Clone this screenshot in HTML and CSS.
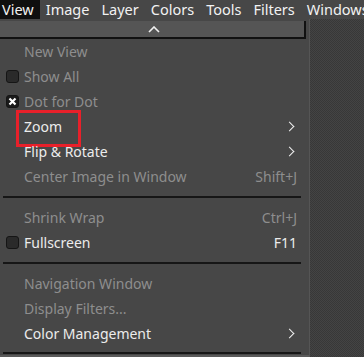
FILE: index.html
```html
<!DOCTYPE html>
<html lang="en">
<head>
  <meta charset="UTF-8" />
  <title>View menu</title>
  <link rel="stylesheet" href="styles.css">
</head>
<body>
  <nav class="menubar">
    <span class="menubar-item active">View</span>
    <span class="menubar-item">Image</span>
    <span class="menubar-item">Layer</span>
    <span class="menubar-item">Colors</span>
    <span class="menubar-item">Tools</span>
    <span class="menubar-item">Filters</span>
    <span class="menubar-item">Windows</span>
  </nav>

  <div class="workspace">
    <div class="menu">
      <div class="scroll-up">
        <svg width="12" height="7" viewBox="0 0 12 7"><path d="M1 6 L6 1 L11 6" fill="none" stroke="#f0f0f0" stroke-width="1.6"/></svg>
      </div>

      <div class="item disabled"><span class="label">New View</span></div>
      <div class="item disabled"><span class="check"></span><span class="label">Show All</span></div>
      <div class="item disabled">
        <span class="check checked">
          <svg width="11" height="11" viewBox="0 0 11 11"><path d="M2.5 2.5 L8.5 8.5 M8.5 2.5 L2.5 8.5" stroke="#fff" stroke-width="2.2"/></svg>
        </span>
        <span class="label">Dot for Dot</span>
      </div>
      <div class="item highlight"><span class="label">Zoom</span><span class="arrow"></span></div>
      <div class="item"><span class="label">Flip &amp; Rotate</span><span class="arrow"></span></div>
      <div class="item disabled"><span class="label">Center Image in Window</span><span class="accel">Shift+J</span></div>
      <div class="separator"></div>
      <div class="item disabled"><span class="label">Shrink Wrap</span><span class="accel">Ctrl+J</span></div>
      <div class="item"><span class="check"></span><span class="label">Fullscreen</span><span class="accel">F11</span></div>
      <div class="separator"></div>
      <div class="item disabled"><span class="label">Navigation Window</span></div>
      <div class="item disabled"><span class="label">Display Filters...</span></div>
      <div class="item"><span class="label">Color Management</span><span class="arrow"></span></div>
      <div class="separator last"></div>
    </div>
    <div class="canvas"></div>
  </div>
</body>
</html>
```

FILE: styles.css
```css
* {
  margin: 0;
  padding: 0;
  box-sizing: border-box;
}

body {
  width: 364px;
  height: 357px;
  overflow: hidden;
  background-color: #3c3c3c;
  color: #ececec;
  font-family: 'Noto Sans', 'Open Sans', sans-serif;
  font-size: 14px;
}

.menubar {
  display: flex;
  height: 19px;
  background-color: #474747;
  white-space: nowrap;
}

.menubar-item {
  padding: 0 6px;
  line-height: 18px;
  font-size: 14.5px;
  color: #f2f2f2;
}

.menubar-item.active {
  background-color: #0f0f0f;
  padding: 0 6px 0 2px;
}

.workspace {
  display: flex;
  height: 338px;
}

.menu {
  width: 310px;
  background-color: #474747;
  border-right: 1px solid #555;
  border-bottom: 2px solid #5a5a5a;
  padding-top: 2px;
}

.scroll-up {
  height: 18px;
  margin-right: 3px;
  background-color: #555;
  border-bottom: 2px solid #111;
  border-right: 2px solid #111;
  display: flex;
  justify-content: center;
  align-items: center;
}

.scroll-up svg {
  margin-left: 3px;
}

.item {
  position: relative;
  display: flex;
  align-items: center;
  height: 25px;
  padding: 0 12px 0 24px;
}

.item .label {
  flex: 1;
}

.item.disabled {
  color: #8e8e8e;
}

.check {
  position: absolute;
  left: 6px;
  top: 6px;
  width: 13px;
  height: 13px;
  border: 1px solid #151515;
  border-radius: 3px;
  background-color: #2a2a2a;
}

.check.checked {
  background-color: #1a1a1a;
}

.check svg {
  display: block;
}

.arrow {
  width: 7px;
  height: 7px;
  border-top: 1.5px solid #f0f0f0;
  border-right: 1.5px solid #f0f0f0;
  transform: rotate(45deg);
  margin-right: 4px;
}

.highlight::after {
  content: '';
  position: absolute;
  left: 16px;
  top: -4px;
  width: 59px;
  height: 31px;
  border: 3px solid #e8202a;
}

.separator {
  height: 16px;
  display: flex;
  align-items: center;
  padding: 0 8px 0 3px;
}

.separator::before {
  content: '';
  flex: 1;
  height: 2px;
  background-color: #161616;
}

.separator.last {
  height: 8px;
  align-items: flex-end;
}

.canvas {
  flex: 1;
  background-color: #3e3e3e;
  background-image: repeating-conic-gradient(#383838 0% 25%, #444 0% 50%);
  background-size: 2px 2px;
}
```
